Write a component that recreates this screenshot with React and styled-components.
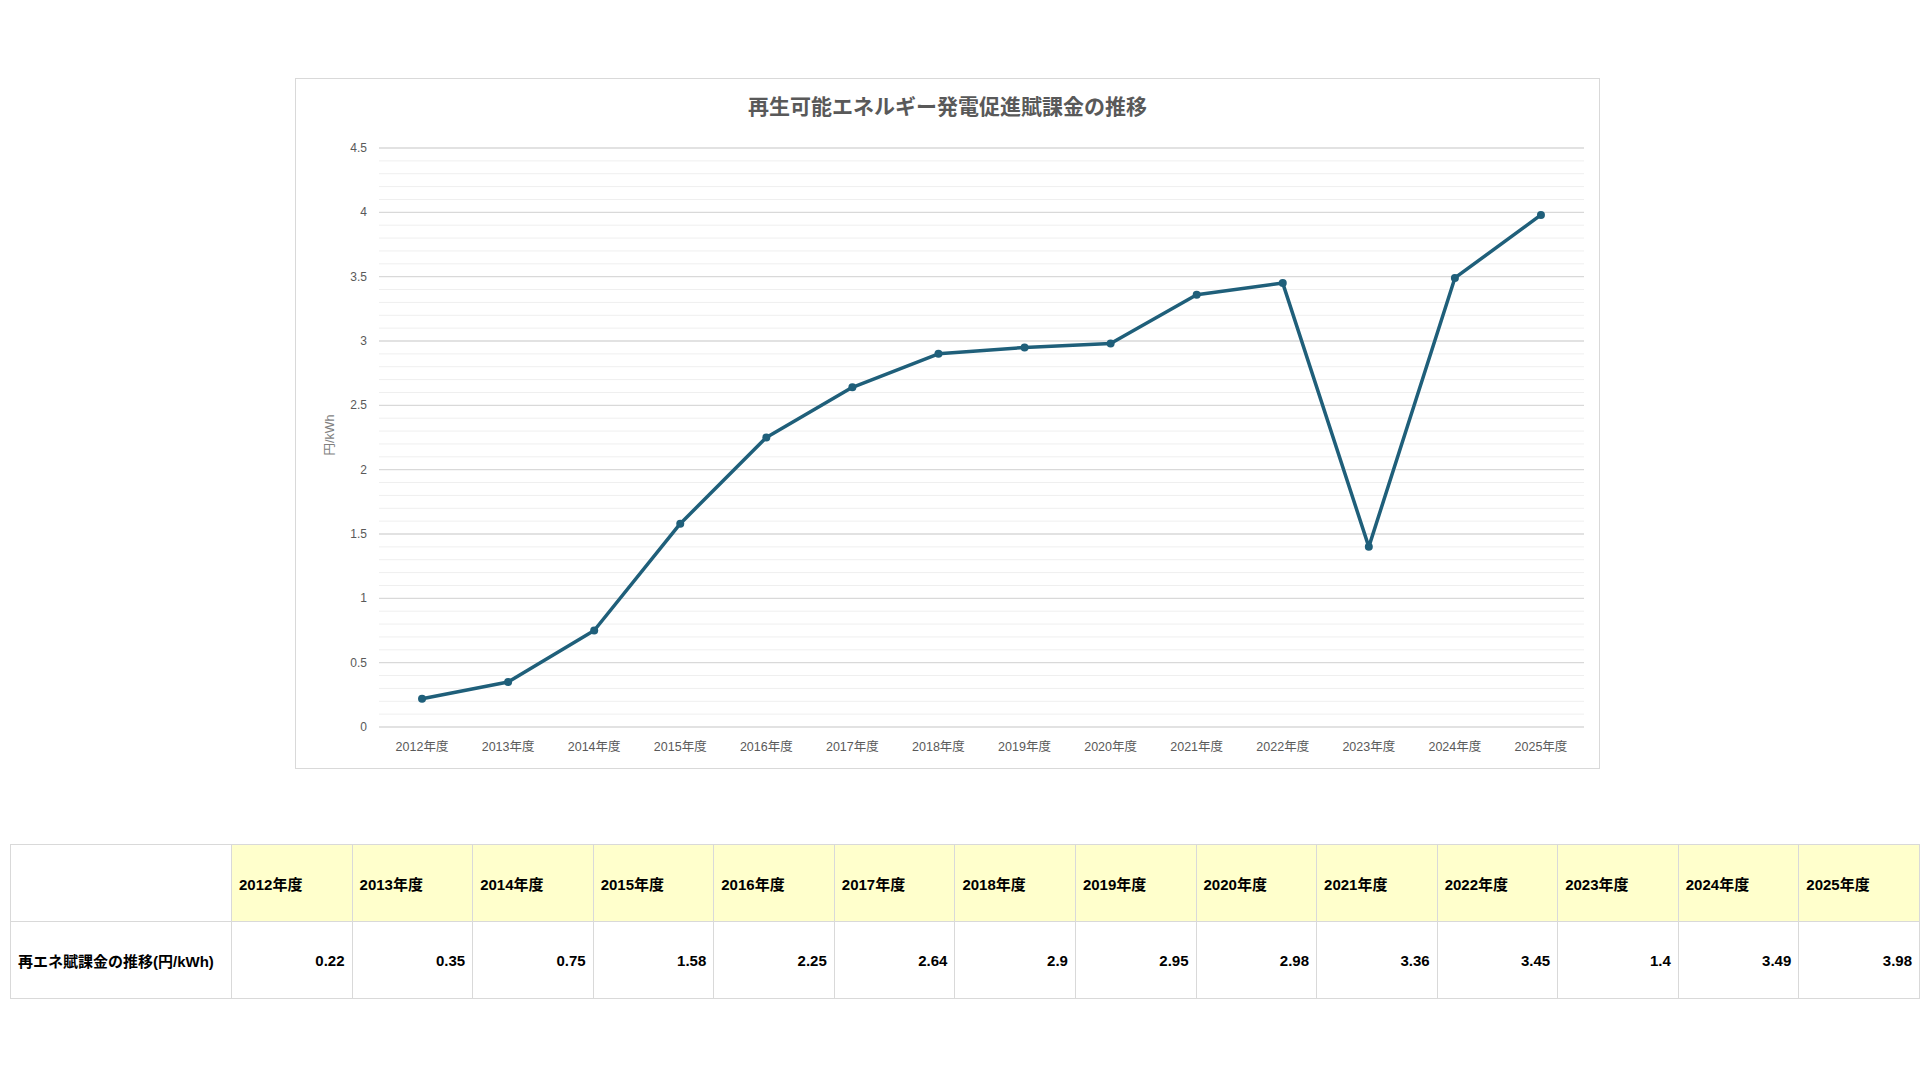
import React from "react";
import styled, { createGlobalStyle } from "styled-components";

const G = createGlobalStyle`
  body { margin: 0; background: #fff; font-family: "Liberation Sans", Arial, "Noto Sans CJK JP", sans-serif; }
`;
const Page = styled.div`
  padding-top: 78px;
  display: flex; flex-direction: column; gap: 75px;
`;
const Card = styled.div`
  margin-left: 295px; width: 1303px; height: 689px;
  border: 1px solid #d9d9d9; display: flex; flex-direction: column;
`;
const Title = styled.div`
  height: 56px; line-height: 56px; text-align: center;
  font-size: 21px; font-weight: bold; color: #595959;
  font-family: "Liberation Sans", "Noto Sans CJK JP", sans-serif;
`;
const Table = styled.table`
  margin-left: 10px; width: 1910px; border-collapse: collapse;
  table-layout: fixed; border: 1.5px solid #a0a0a0;
`;
const Th = styled.td`
  height: 76px; padding: 0 7px; font-size: 15px; font-weight: bold;
  background: ${p => p.$blank ? "#fff" : "#ffffcc"};
  border: 1px solid #d9d9d9; text-align: left;
  font-family: "Liberation Sans", "Noto Sans CJK JP", sans-serif;
`;
const Td = styled.td`
  height: 76px; padding: 0 7px; font-size: 15px; font-weight: bold;
  border: 1px solid #d9d9d9; text-align: ${p => p.$left ? "left" : "right"};
  font-family: "Liberation Sans", "Noto Sans CJK JP", sans-serif;
`;

const years = Array.from({ length: 14 }, (_, i) => 2012 + i);
const vals = [0.22, 0.35, 0.75, 1.58, 2.25, 2.64, 2.9, 2.95, 2.98, 3.36, 3.45, 1.4, 3.49, 3.98];

function Chart() {
  const L = 83, R = 1288, Y0 = 592, k = (592 - 13) / 4.5;
  const cw = (R - L) / 14;
  const x = i => L + cw * (i + 0.5);
  const y = v => Y0 - v * k;
  const lines = [];
  for (let i = 0; i <= 45; i++) {
    const major = i % 5 === 0;
    lines.push(<line key={i} x1={L} x2={R} y1={y(i / 10)} y2={y(i / 10)} stroke={major ? "#d9d9d9" : "#efefef"} strokeWidth={major ? 1.3 : 1} />);
  }
  const pts = vals.map((v, i) => `${x(i)},${y(v)}`).join(" ");
  return (
    <svg width="1303" height="633" style={{ display: "block" }}>
      {lines}
      {[0, 0.5, 1, 1.5, 2, 2.5, 3, 3.5, 4, 4.5].map(v => (
        <text key={v} x={L - 12} y={y(v) + 4} textAnchor="end" fontSize="12" fill="#595959" fontFamily="Liberation Sans, sans-serif">{v}</text>
      ))}
      {years.map((yr, i) => (
        <text key={yr} x={x(i)} y={616} textAnchor="middle" fontSize="12.5" fill="#595959" fontFamily="Liberation Sans, Noto Sans CJK JP, sans-serif">{yr}年度</text>
      ))}
      <text transform={`translate(38,300) rotate(-90)`} textAnchor="middle" fontSize="12.5" fill="#7f7f7f" fontFamily="Liberation Sans, Noto Sans CJK JP, sans-serif">円/kWh</text>
      <polyline points={pts} fill="none" stroke="#1f5f7a" strokeWidth="3.5" strokeLinejoin="round" />
      {vals.map((v, i) => <circle key={i} cx={x(i)} cy={y(v)} r="4" fill="#1f5f7a" />)}
    </svg>
  );
}

export default function App() {
  return (
    <>
      <G />
      <Page>
        <Card>
          <Title>再生可能エネルギー発電促進賦課金の推移</Title>
          <Chart />
        </Card>
        <Table>
          <colgroup>
            <col style={{ width: 221 }} />
            {years.map(y => <col key={y} />)}
          </colgroup>
          <tbody>
            <tr>
              <Th $blank />
              {years.map(y => <Th key={y}>{y}年度</Th>)}
            </tr>
            <tr>
              <Td $left>再エネ賦課金の推移(円/kWh)</Td>
              {vals.map((v, i) => <Td key={i}>{v}</Td>)}
            </tr>
          </tbody>
        </Table>
      </Page>
    </>
  );
}
